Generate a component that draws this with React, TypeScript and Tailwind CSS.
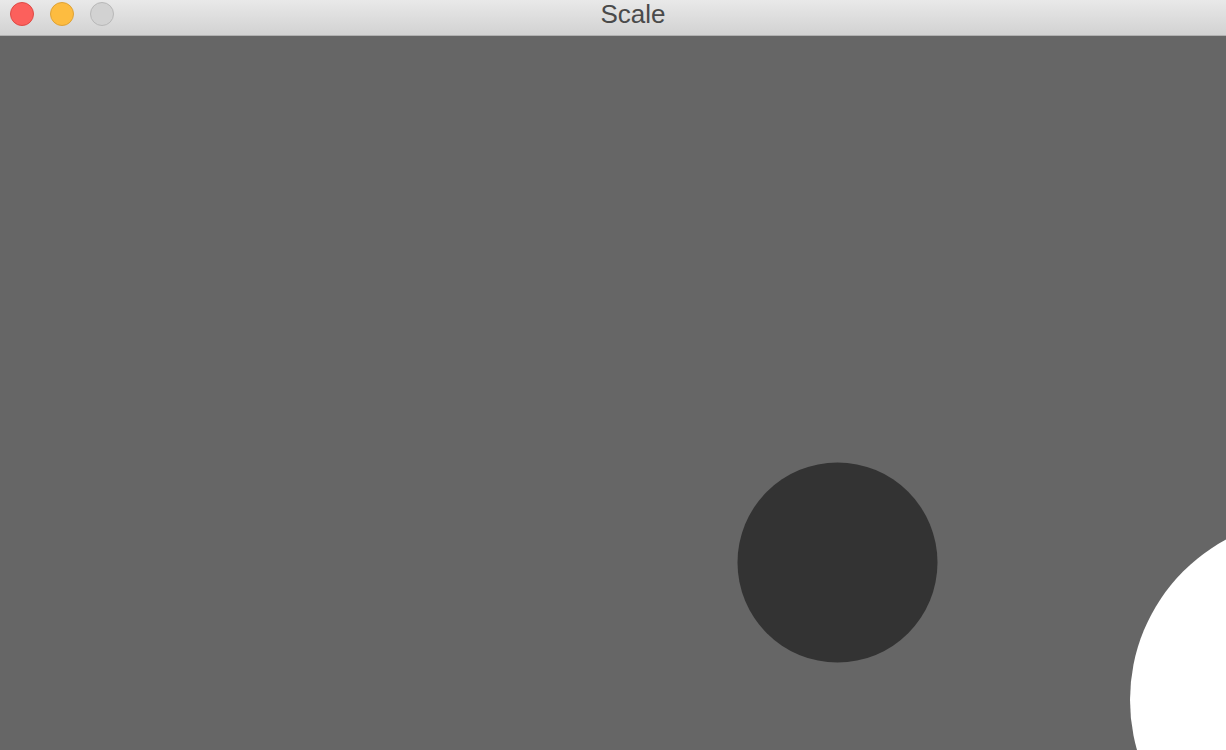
import React from 'react'

function TrafficLights() {
  return (
    <div className="absolute left-[10px] top-[2px] flex items-center gap-[16px]">
      <span className="block w-[24px] h-[24px] rounded-full bg-[#fc605c] border border-[#de4a45]" />
      <span className="block w-[24px] h-[24px] rounded-full bg-[#fdbc40] border border-[#dea236]" />
      <span className="block w-[24px] h-[24px] rounded-full bg-[#d2d2d2] border border-[#b8b8b8]" />
    </div>
  )
}

export default function App() {
  return (
    <div className="w-[1226px] h-[750px] flex flex-col overflow-hidden bg-[#666666]">
      <header className="relative h-[36px] shrink-0 flex items-start justify-center bg-gradient-to-b from-[#e9e9e9] to-[#d2d2d2] border-b border-[#b1b1b1]">
        <TrafficLights />
        <span
          className="ml-[40px] mt-[-1px] text-[26px] leading-[30px] text-[#4a4a4a]"
          style={{ fontFamily: '"Liberation Sans", Arial, sans-serif' }}
        >
          Scale
        </span>
      </header>

      {/* sketch canvas */}
      <div className="relative flex-1 bg-[#666666]">
        <svg width="1226" height="714" className="absolute inset-0">
          <circle cx="837.5" cy="526.5" r="100" fill="#333333" />
          <circle cx="1312" cy="664" r="182" fill="#ffffff" />
        </svg>
      </div>
    </div>
  )
}
